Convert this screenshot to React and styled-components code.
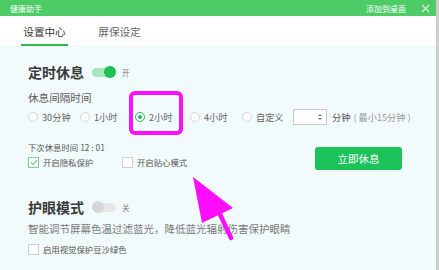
import styled, { createGlobalStyle } from 'styled-components'

const Global = createGlobalStyle`
  html, body { margin: 0; padding: 0; background: #cfcfcf; }
  body { font-family: "Noto Sans CJK SC", "Noto Sans", sans-serif; overflow: hidden; }
`

const Window = styled.div`
  position: relative;
  width: 436px;
  height: 270px;
  background: #f1fbfc;
  border-right: 1px solid #c9c9c9;
  overflow: hidden;
`
const TitleBar = styled.header`
  height: 16px;
  background: #4ccb67;
  display: flex;
  align-items: center;
  padding: 0 6px 0 10px;
  color: #fff;
  font-size: 8px;
`
const TitleText = styled.span`
  flex: 1;
`
const AddDesk = styled.span`
  margin-right: 15px;
`
const Close = styled.svg`
  display: block;
`
const Tabs = styled.nav`
  height: 30px;
  background: #fff;
  display: flex;
  align-items: stretch;
  padding-left: 21px;
  gap: 28px;
  border-bottom: 1px solid #eef3f3;
`
const Tab = styled.div`
  width: 47px;
  font-size: 10.6px;
  color: ${p => (p.$active ? '#333' : '#666')};
  display: flex;
  align-items: center;
  justify-content: center;
  border-bottom: 2px solid ${p => (p.$active ? '#2bb950' : 'transparent')};
  box-sizing: border-box;
  padding-top: 3px;
`
const Content = styled.main`
  padding: 15px 0 0 28px;
  display: flex;
  flex-direction: column;
`
const SectionHead = styled.div`
  height: 20px;
  display: flex;
  align-items: center;
  margin-top: ${p => p.$top || 0}px;
`
const SectionTitle = styled.h2`
  margin: 0;
  font-size: 14px;
  font-weight: 700;
  color: #3a3a3a;
  width: 64px;
`
const Track = styled.span`
  width: 24px;
  height: 9px;
  border-radius: 5px;
  background: ${p => (p.$on ? '#a6e8b8' : '#e6e8e8')};
  display: inline-flex;
  align-items: center;
  justify-content: ${p => (p.$on ? 'flex-end' : 'flex-start')};
`
const Knob = styled.span`
  width: 12px;
  height: 12px;
  border-radius: 50%;
  background: ${p => (p.$on ? '#1dbf55' : '#d5d7d7')};
`
const ToggleText = styled.span`
  font-size: 7.5px;
  color: #777;
  margin-left: 6px;
`
const Label = styled.div`
  font-size: 10.6px;
  color: #5a5a5a;
  height: 14px;
  line-height: 14px;
  margin-top: 9px;
`
const RadioRow = styled.div`
  height: 16px;
  display: flex;
  align-items: center;
  margin-top: 4px;
  font-size: 9.2px;
  color: #666;
`
const RadioItem = styled.label`
  width: ${p => p.$w}px;
  display: flex;
  align-items: center;
  gap: 4px;
  flex-shrink: 0;
`
const Radio = styled.span`
  width: 10px;
  height: 10px;
  border-radius: 50%;
  box-sizing: border-box;
  border: 1px solid ${p => (p.$checked ? '#1dbf55' : '#d6d6d6')};
  background: #fff;
  display: inline-flex;
  align-items: center;
  justify-content: center;
  &::after {
    content: '';
    width: 4px;
    height: 4px;
    border-radius: 50%;
    background: ${p => (p.$checked ? '#1dbf55' : 'transparent')};
  }
`
const NumberBox = styled.span`
  width: 34px;
  height: 16px;
  box-sizing: border-box;
  border: 1px solid #c8c8c8;
  background: #fff;
  margin-left: 8px;
  display: flex;
  align-items: center;
  justify-content: flex-end;
  padding-right: 4px;
`
const Unit = styled.span`
  margin-left: 5px;
  color: #555;
`
const Hint = styled.span`
  margin-left: 3px;
  color: #999;
`
const ActionRow = styled.div`
  display: flex;
  justify-content: space-between;
  align-items: flex-start;
  margin-top: 17px;
  padding-right: 34px;
`
const LeftCol = styled.div`
  display: flex;
  flex-direction: column;
`
const NextTime = styled.div`
  font-size: 8.4px;
  color: #555;
  height: 10px;
  line-height: 10px;
`
const CheckRow = styled.div`
  display: flex;
  align-items: center;
  height: 12px;
  margin-top: ${p => p.$top || 0}px;
`
const CheckItem = styled.label`
  display: flex;
  align-items: center;
  gap: 4px;
  font-size: 8.4px;
  color: #555;
  width: ${p => p.$w || 'auto'};
`
const Box = styled.span`
  width: 11px;
  height: 11px;
  box-sizing: border-box;
  border: 1px solid ${p => (p.$checked ? '#7ccf95' : '#cfcfcf')};
  background: #fff;
  display: inline-flex;
  align-items: center;
  justify-content: center;
`
const RestButton = styled.button`
  width: 87px;
  height: 23px;
  margin-top: 5px;
  border: none;
  border-radius: 3px;
  background: #1cc25a;
  color: #fff;
  font-family: inherit;
  font-size: 10.5px;
`
const Desc = styled.p`
  margin: 5px 0 0;
  height: 14px;
  line-height: 14px;
  font-size: 10.5px;
  color: #7a7a7a;
`
const Highlight = styled.div`
  position: absolute;
  left: 129px;
  top: 91px;
  width: 54px;
  height: 44px;
  box-sizing: border-box;
  border: 4px solid #ff0dff;
  border-radius: 6px;
`
const Arrow = styled.svg`
  position: absolute;
  left: 0;
  top: 0;
  pointer-events: none;
`

function Check({ checked }) {
  return (
    <Box $checked={checked}>
      {checked && (
        <svg width="8" height="7" viewBox="0 0 8 7">
          <path d="M1 3.5 L3.2 5.6 L7 1.2" fill="none" stroke="#3fb766" strokeWidth="1" />
        </svg>
      )}
    </Box>
  )
}

function Toggle({ on, text }) {
  return (
    <>
      <Track $on={on}><Knob $on={on} /></Track>
      <ToggleText>{text}</ToggleText>
    </>
  )
}

const options = [
  { text: '30分钟', w: 52 },
  { text: '1小时', w: 55 },
  { text: '2小时', w: 55, checked: true },
  { text: '4小时', w: 52 },
  { text: '自定义', w: 43 },
]

export default function App() {
  return (
    <Window>
      <Global />
      <TitleBar>
        <TitleText>健康助手</TitleText>
        <AddDesk>添加到桌面</AddDesk>
        <Close width="9" height="9" viewBox="0 0 9 9">
          <path d="M1 1 L8 8 M8 1 L1 8" stroke="#d8f5df" strokeWidth="1.1" />
        </Close>
      </TitleBar>
      <Tabs>
        <Tab $active>设置中心</Tab>
        <Tab>屏保设定</Tab>
      </Tabs>
      <Content>
        <SectionHead>
          <SectionTitle>定时休息</SectionTitle>
          <Toggle on text="开" />
        </SectionHead>
        <Label>休息间隔时间</Label>
        <RadioRow>
          {options.map(o => (
            <RadioItem key={o.text} $w={o.w}>
              <Radio $checked={o.checked} />
              {o.text}
            </RadioItem>
          ))}
          <NumberBox>
            <svg width="4" height="8" viewBox="0 0 4 8">
              <path d="M0 3 L2 1 L4 3 Z M0 5 L2 7 L4 5 Z" fill="#777" />
            </svg>
          </NumberBox>
          <Unit>分钟</Unit>
          <Hint>( 最小15分钟 )</Hint>
        </RadioRow>
        <ActionRow>
          <LeftCol>
            <NextTime>下次休息时间 12 : 01</NextTime>
            <CheckRow $top={4}>
              <CheckItem $w="94px"><Check checked />开启隐私保护</CheckItem>
              <CheckItem><Check />开启贴心模式</CheckItem>
            </CheckRow>
          </LeftCol>
          <RestButton>立即休息</RestButton>
        </ActionRow>
        <SectionHead $top={27}>
          <SectionTitle>护眼模式</SectionTitle>
          <Toggle text="关" />
        </SectionHead>
        <Desc>智能调节屏幕色温过滤蓝光，降低蓝光辐射伤害保护眼睛</Desc>
        <CheckRow $top={7}>
          <CheckItem><Check />启用视觉保护豆沙绿色</CheckItem>
        </CheckRow>
      </Content>
      <Highlight />
      <Arrow width="436" height="270">
        <polygon points="193,177 202,223 233,208" fill="#ff0dff" />
        <line x1="219" y1="212" x2="231" y2="238" stroke="#ff0dff" strokeWidth="4.5" strokeLinecap="round" />
      </Arrow>
    </Window>
  )
}
